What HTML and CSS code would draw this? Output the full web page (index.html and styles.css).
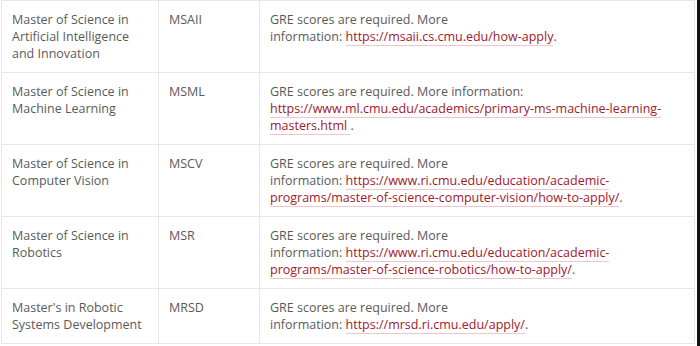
FILE: index.html
```html
<!DOCTYPE html>
<html lang="en">
<head>
    <meta charset="UTF-8">
    <meta name="viewport" content="width=device-width, initial-scale=1.0">
    <title>Graduate Programs</title>
    <link rel="stylesheet" href="styles.css">
</head>
<body>
    <div class="frame">
        <table class="programs">
            <tbody>
                <tr>
                    <td class="name">Master of Science in Artificial Intelligence and Innovation</td>
                    <td class="code">MSAII</td>
                    <td class="info">GRE scores are required. More information:&nbsp;<a href="#">https://msaii.cs.cmu.edu/how-apply</a>.</td>
                </tr>
                <tr>
                    <td class="name">Master of Science in Machine Learning</td>
                    <td class="code">MSML</td>
                    <td class="info">GRE scores are required. More information: <a href="#">https://www.ml.cmu.edu/academics/primary-ms-machine-learning-masters.html </a>.</td>
                </tr>
                <tr>
                    <td class="name">Master of Science in Computer Vision</td>
                    <td class="code">MSCV</td>
                    <td class="info">GRE scores are required. More information:&nbsp;<a href="#">https://www.ri.cmu.edu/education/academic-programs/master-of-science-computer-vision/how-to-apply/</a>.</td>
                </tr>
                <tr>
                    <td class="name">Master of Science in Robotics</td>
                    <td class="code">MSR</td>
                    <td class="info">GRE scores are required. More information:&nbsp;<a href="#">https://www.ri.cmu.edu/education/academic-programs/master-of-science-robotics/how-to-apply/</a>.</td>
                </tr>
                <tr>
                    <td class="name">Master's in Robotic Systems Development</td>
                    <td class="code">MRSD</td>
                    <td class="info">GRE scores are required. More information:&nbsp;<a href="#">https://mrsd.ri.cmu.edu/apply/</a>.</td>
                </tr>
            </tbody>
        </table>
    </div>
</body>
</html>
```

FILE: styles.css
```css
body {
    margin: 0;
    padding: 0;
    background-color: #fff;
    font-family: "Open Sans", "Liberation Sans", sans-serif;
    font-size: 12.5px;
    color: #5a5a5a;
}
.frame {
    width: 697px;
    height: 346px;
    overflow: hidden;
    border-right: 3px solid #111;
}
.programs {
    width: 694px;
    margin: 0 0 0 1px;
    border-collapse: collapse;
    table-layout: fixed;
}
.programs td {
    border: 1px solid #e8e8e8;
    padding: 10px 10px 10px 10px;
    vertical-align: top;
    line-height: 17px;
    text-align: left;
}
.programs .name {
    width: 136px;
}
.programs .code {
    width: 80px;
}
.programs a {
    color: #a0182c;
    text-decoration: none;
    border-bottom: 1px solid #ecc6cc;
}
```
